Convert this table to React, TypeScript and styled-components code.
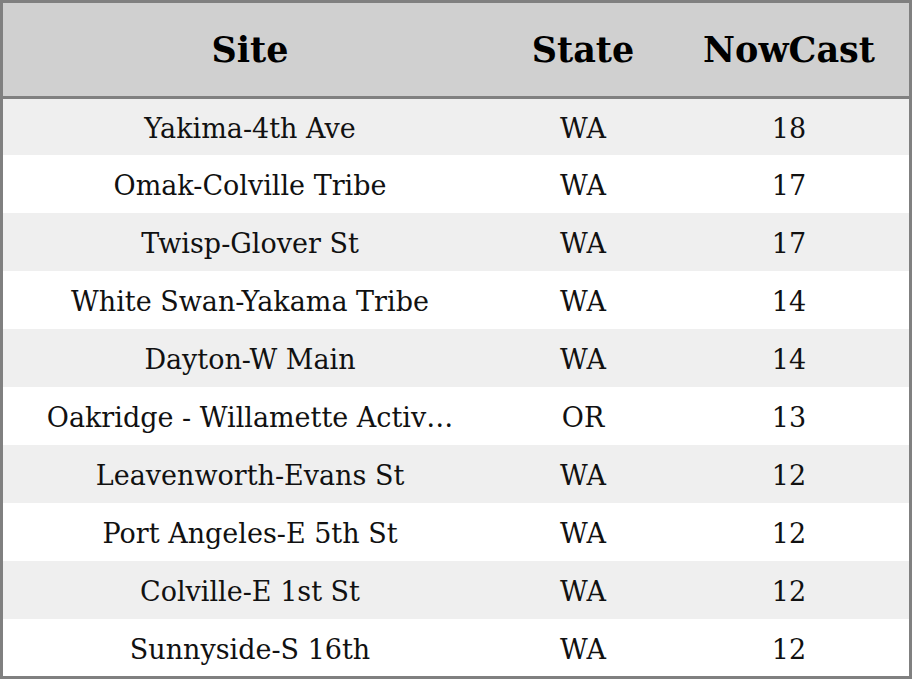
import React from "react";
import styled, { createGlobalStyle } from "styled-components";

const Global = createGlobalStyle`
  html, body { margin: 0; padding: 0; background: #ffffff; }
  body { font-family: "DejaVu Serif", serif; }
`;

const Table = styled.div`
  box-sizing: border-box;
  width: 912px;
  height: 679px;
  border: 3px solid #808080;
  display: grid;
  grid-template-columns: 494px 172px 240px;
  grid-template-rows: 93px 3px 56px repeat(8, 58px) 57px;
  background: #ffffff;
`;

const HeadCell = styled.div`
  background: #d0d0d0;
  display: flex;
  align-items: center;
  justify-content: center;
  font-family: "DejaVu Serif", serif;
  font-weight: bold;
  font-size: 35px;
  color: #000000;
`;

const Divider = styled.div`
  grid-column: 1 / -1;
  background: #808080;
`;

const Cell = styled.div<{ $odd: boolean }>`
  box-sizing: border-box;
  background: ${(p) => (p.$odd ? "#efefef" : "#ffffff")};
  display: flex;
  align-items: center;
  justify-content: center;
  padding-top: 3px;
  font-family: "DejaVu Serif", serif;
  font-size: 27px;
  color: #111111;
  white-space: nowrap;
  overflow: hidden;
`;

const rows: [string, string, number][] = [
  ["Yakima-4th Ave", "WA", 18],
  ["Omak-Colville Tribe", "WA", 17],
  ["Twisp-Glover St", "WA", 17],
  ["White Swan-Yakama Tribe", "WA", 14],
  ["Dayton-W Main", "WA", 14],
  ["Oakridge - Willamette Activ…", "OR", 13],
  ["Leavenworth-Evans St", "WA", 12],
  ["Port Angeles-E 5th St", "WA", 12],
  ["Colville-E 1st St", "WA", 12],
  ["Sunnyside-S 16th", "WA", 12],
];

export default function App() {
  return (
    <>
      <Global />
      <Table>
        <HeadCell>Site</HeadCell>
        <HeadCell>State</HeadCell>
        <HeadCell>NowCast</HeadCell>
        <Divider />
        {rows.map(([site, state, val], i) => (
          <React.Fragment key={i}>
            <Cell $odd={i % 2 === 0}>{site}</Cell>
            <Cell $odd={i % 2 === 0}>{state}</Cell>
            <Cell $odd={i % 2 === 0}>{val}</Cell>
          </React.Fragment>
        ))}
      </Table>
    </>
  );
}
